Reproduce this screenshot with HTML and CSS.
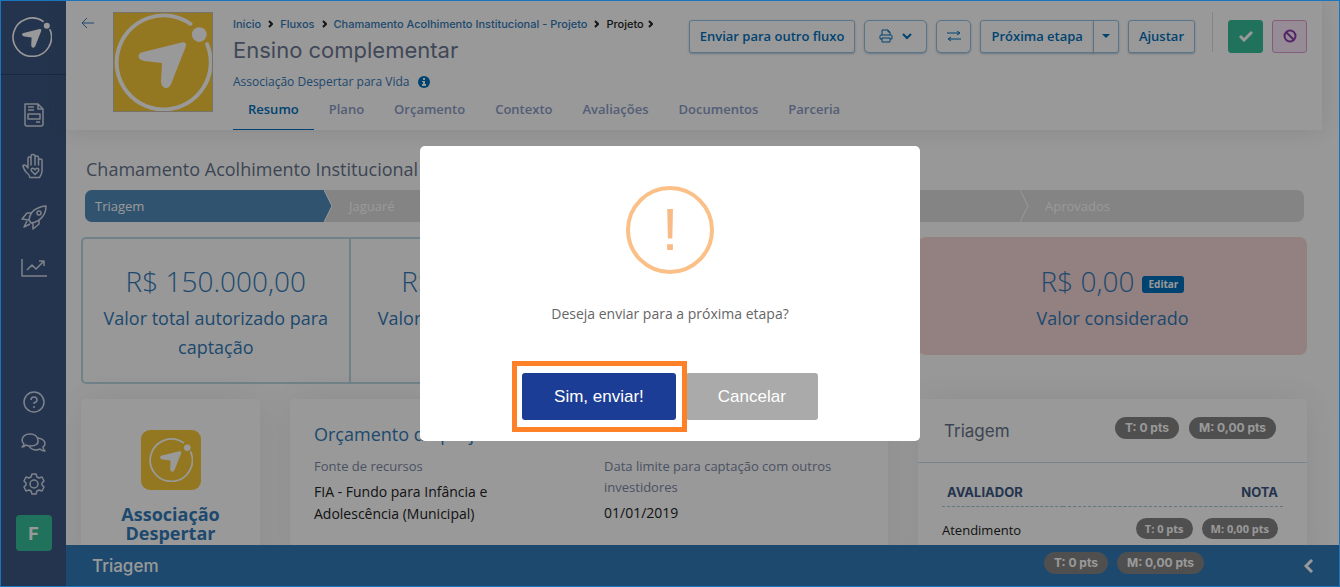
FILE: index.html
```html
<!DOCTYPE html>
<html lang="pt-br">
<head>
    <meta charset="UTF-8">
    <meta name="viewport" content="width=device-width, initial-scale=1">
    <title>Ensino complementar</title>
    <link rel="stylesheet" href="styles.css">
</head>
<body>
    <!-- Símbolos usados no menu, nos avatares e no breadcrumb -->
    <svg class="sprite" aria-hidden="true">
        <symbol id="marca" viewBox="0 0 100 100">
            <path d="M78 11A48 48 0 1 0 95 32" fill="none" stroke="currentColor" stroke-width="4" stroke-linecap="round"/>
            <circle cx="87" cy="22" r="7.500" fill="currentColor"/>
            <path d="M29 40L69 30Q75 29 73 35L58 73Q55 78 51 76Q48 74 48 70L49 51L31 49Q25 48 25 44Q25 41 29 40Z" fill="currentColor"/>
        </symbol>
        <symbol id="seta" viewBox="0 0 5 8"><path d="M1 1l3 3-3 3" fill="none" stroke="#222" stroke-width="2"/></symbol>
    </svg>

    <aside class="sidebar">
        <a class="marca" href="#" aria-label="Início"><svg><use href="#marca"/></svg></a>
        <nav class="menu">
            <a href="#" aria-label="Projetos"><svg width="24" height="26" viewBox="0 0 24 26"><path d="M3 2h13l5 5v15a2 2 0 0 1-2 2H5a2 2 0 0 1-2-2zM16 2v5h5M6 5h6M6 8h6M6 12h12v5H6zM14 20h4"/></svg></a>
            <a href="#" aria-label="Doações"><svg width="24" height="26" viewBox="0 0 24 26"><path d="M8 24.500Q7 21 4 19Q1 15 1 12.500Q3.500 11 6 15V5.500Q6 4 7.500 4T9 5.500V12V3.500Q9 1.500 11 1.500T13 3.500V12V4.500Q13 3 14.700 3T16.500 4.500V12V7.500Q16.500 6 18.300 6T20 7.500V18Q20 21 17.500 24.500Z"/><path d="M13 21.500l-3.500-3.500q-1-2.500 1.200-2.800 1.300 0 2.300 1.600 1-1.600 2.300-1.600 2.200.3 1.200 2.800z"/></svg></a>
            <a href="#" aria-label="Fluxos"><svg width="26" height="26" viewBox="0 0 26 26"><path d="M8 16q1-9 9-12 4-2 8-2 0 6-3 10-4 6-12 7zM10 9H6l-5 6 7 1M18 16v4l-6 5v-6M6 17l-3 6 6-3"/><circle cx="18" cy="9" r="2"/></svg></a>
            <a href="#" aria-label="Relatórios"><svg width="26" height="22" viewBox="0 0 26 22"><path d="M1 2v17h25M6 13l5-5 4 4 7-7M18 4h5v5"/></svg></a>
        </nav>
        <div class="menu menu-rodape">
            <a href="#" aria-label="Ajuda"><svg width="22" height="22" viewBox="0 0 22 22"><circle cx="11" cy="11" r="10"/><path d="M8 9q0-3 3-3t3 3q0 2-3 3v1M11 15v2"/></svg></a>
            <a href="#" aria-label="Mensagens"><svg width="26" height="20" viewBox="0 0 26 20"><path d="M1 14q2-2 2-3-2-2-2-4 1-6 8-6t8 6-8 6q-2 0-4-1-2 2-4 2zM8 13q2 4 8 4l3-1q2 2 5 2-2-2-2-4 2-1 2-4-1-4-7-5"/></svg></a>
            <a href="#" aria-label="Configurações"><svg width="22" height="22" viewBox="0 0 22 22"><path d="M9 1h4l1 3 2 1 3-1 2 4-2 2v2l2 2-2 4-3-1-2 1-1 3H9l-1-3-2-1-3 1-2-4 2-2v-2L1 8l2-4 3 1 2-1z"/><circle cx="11" cy="11" r="4"/></svg></a>
        </div>
        <button class="usuario" type="button">F</button>
    </aside>

    <main class="pagina">
        <header class="cabecalho">
            <a class="voltar" href="#" aria-label="Voltar"><svg width="13" height="12" viewBox="0 0 13 12"><path d="M13 6H1M6 1L1 6l5 5"/></svg></a>
            <div class="avatar"><svg><use href="#marca"/></svg></div>
            <div class="dados">
                <div class="topo">
                    <div class="titulo">
                        <nav class="breadcrumb">
                            <a href="#">Início</a><svg class="seta"><use href="#seta"/></svg>
                            <a href="#">Fluxos</a><svg class="seta"><use href="#seta"/></svg>
                            <a href="#">Chamamento Acolhimento Institucional - Projeto</a><svg class="seta"><use href="#seta"/></svg>
                            <span>Projeto</span><svg class="seta ultima"><use href="#seta"/></svg>
                        </nav>
                        <h1>Ensino complementar</h1>
                        <a class="entidade" href="#">Associação Despertar para Vida
                            <svg width="12" height="12" viewBox="0 0 12 12"><circle cx="6" cy="6" r="6" fill="#0071bc"/><path d="M5 2h2v2H5zM4 5h3v3h1v2H4V8h1V6H4z" fill="#fff"/></svg>
                        </a>
                    </div>
                    <div class="acoes">
                        <button class="btn" type="button">Enviar para outro fluxo</button>
                        <button class="btn btn-imprimir" type="button" aria-label="Imprimir">
                            <svg width="14" height="14" viewBox="0 0 14 14"><path d="M3 6V1h6l2 2v3M9 1v2h2M3 10H1V7q0-1 1-1h10q1 0 1 1v3h-2M3 9h8v4H3z"/></svg>
                            <svg class="grosso" width="10" height="7" viewBox="0 0 10 7"><path d="M1 1l4 4 4-4"/></svg>
                        </button>
                        <button class="btn btn-icone" type="button" aria-label="Trocar">
                            <svg width="14" height="10" viewBox="0 0 14 10"><path d="M0 2h12M10 0l3 2-3 2M14 8H2M4 6L1 8l3 2"/></svg>
                        </button>
                        <div class="grupo">
                            <button class="btn" type="button">Próxima etapa</button>
                            <button class="btn btn-caret" type="button" aria-label="Mais etapas"><span class="caret"></span></button>
                        </div>
                        <button class="btn" type="button">Ajustar</button>
                        <span class="divisor"></span>
                        <button class="btn btn-icone btn-aprovar" type="button" aria-label="Aprovar">
                            <svg width="14" height="11" viewBox="0 0 14 11"><path d="M1 5l4 4 8-8"/></svg>
                        </button>
                        <button class="btn btn-icone btn-recusar" type="button" aria-label="Recusar">
                            <svg width="14" height="14" viewBox="0 0 14 14"><circle cx="7" cy="7" r="5.500"/><path d="M3 3l8 8"/></svg>
                        </button>
                    </div>
                </div>
                <nav class="abas">
                    <a class="ativa" href="#">Resumo</a>
                    <a href="#">Plano</a>
                    <a href="#">Orçamento</a>
                    <a href="#">Contexto</a>
                    <a href="#">Avaliações</a>
                    <a href="#">Documentos</a>
                    <a href="#">Parceria</a>
                </nav>
            </div>
        </header>

        <section class="conteudo">
            <h2 class="fluxo">Chamamento Acolhimento Institucional</h2>
            <ol class="etapas">
                <li class="atual">Triagem<svg viewBox="0 0 9 32"><path d="M0 0l8 16-8 16z"/><path class="linha" d="M0 0l8 16-8 16"/></svg></li>
                <li>Jaguaré<svg viewBox="0 0 9 32"><path class="linha" d="M0 0l8 16-8 16"/></svg></li>
                <li><svg viewBox="0 0 9 32"><path class="linha" d="M0 0l8 16-8 16"/></svg></li>
                <li><svg viewBox="0 0 9 32"><path class="linha" d="M0 0l8 16-8 16"/></svg></li>
                <li>Aprovados</li>
            </ol>

            <div class="valores">
                <div class="caixas">
                    <div class="valor"><strong>R$ 150.000,00</strong><span>Valor total autorizado para captação</span></div>
                    <div class="valor"><strong>R$ 15.000,00</strong><span>Valor máximo autorizado</span></div>
                    <div class="valor"></div>
                </div>
                <div class="valor considerado">
                    <strong>R$ 0,00 <button class="editar" type="button">Editar</button></strong>
                    <span>Valor considerado</span>
                </div>
            </div>

            <div class="cards">
                <article class="card card-entidade">
                    <div class="logo"><svg><use href="#marca"/></svg></div>
                    <h3>Associação Despertar</h3>
                </article>
                <article class="card card-orcamento">
                    <h3>Orçamento do projeto</h3>
                    <dl>
                        <div>
                            <dt>Fonte de recursos</dt>
                            <dd>FIA - Fundo para Infância e Adolescência (Municipal)</dd>
                        </div>
                        <div>
                            <dt>Data limite para captação com outros investidores</dt>
                            <dd>01/01/2019</dd>
                        </div>
                    </dl>
                </article>
                <article class="card card-triagem">
                    <header>
                        <h3>Triagem</h3>
                        <span class="badge">T: 0 pts</span>
                        <span class="badge">M: 0,00 pts</span>
                    </header>
                    <table>
                        <thead>
                            <tr><th>AVALIADOR</th><th>NOTA</th></tr>
                        </thead>
                        <tbody>
                            <tr>
                                <td>Atendimento</td>
                                <td><span class="badge menor">T: 0 pts</span><span class="badge menor">M: 0,00 pts</span></td>
                            </tr>
                        </tbody>
                    </table>
                </article>
            </div>
        </section>

        <footer class="barra">
            <h4>Triagem</h4>
            <span class="badge">T: 0 pts</span>
            <span class="badge">M: 0,00 pts</span>
            <button type="button" aria-label="Expandir"><svg width="10" height="14" viewBox="0 0 10 14"><path d="M8 1L2 7l6 6"/></svg></button>
        </footer>
    </main>

    <!-- Confirmação -->
    <div class="overlay">
        <div class="modal" role="dialog" aria-modal="true" aria-labelledby="pergunta">
            <div class="alerta">!</div>
            <p id="pergunta">Deseja enviar para a próxima etapa?</p>
            <div class="modal-botoes">
                <button class="confirmar" type="button">Sim, enviar!</button>
                <button class="cancelar" type="button">Cancelar</button>
            </div>
        </div>
    </div>
</body>
</html>
```

FILE: styles.css
```css
* {
    box-sizing: border-box;
}
body {
    margin: 0;
    height: 100vh;
    display: flex;
    overflow: hidden;
    background-color: #fefefe;
    font-family: "Open Sans", "Noto Sans", sans-serif;
    font-size: 13px;
    color: #222;
}
h1, h2, h3, h4, p, ol, dl, dd {
    margin: 0;
    padding: 0;
    font-weight: 400;
}
a {
    color: #337ab7;
    text-decoration: none;
}
button {
    font-family: inherit;
    cursor: pointer;
}
svg {
    fill: none;
    stroke: currentColor;
}
symbol {
    stroke: none;
}
.sprite {
    position: absolute;
    width: 0;
    height: 0;
}

/* Menu lateral */
.sidebar {
    flex: none;
    width: 66px;
    display: flex;
    flex-direction: column;
    align-items: center;
    padding: 0 0 36px 1px;
    background-color: #3c5882;
}
.marca {
    width: 100%;
    height: 75px;
    padding: 17px 11px;
    border-bottom: 1px solid #2c426a;
    color: #fff;
}
.marca svg {
    display: block;
    width: 40px;
    height: 40px;
    stroke: none;
}
.menu {
    display: flex;
    flex-direction: column;
    padding-top: 14px;
}
.menu a {
    height: 51px;
    display: flex;
    align-items: center;
    justify-content: center;
    color: #d2d9e8;
}
.menu svg {
    stroke-width: 1.5;
    stroke-linejoin: round;
}
.menu-rodape {
    margin-top: auto;
    padding: 0 0 11px;
}
.menu-rodape a {
    height: 41px;
}
.usuario {
    width: 36px;
    height: 36px;
    padding: 0;
    border: 0;
    border-radius: 4px;
    background-color: #36bf99;
    color: #fff;
    font-family: Inter, sans-serif;
    font-size: 18px;
    font-weight: 700;
}

/* Cabeçalho */
.pagina {
    flex: 1;
    min-width: 0;
    display: flex;
    flex-direction: column;
}
.cabecalho {
    position: relative;
    flex: none;
    display: flex;
    align-items: flex-start;
    margin-right: 18px;
    padding-right: 15px;
    background-color: #fff;
    box-shadow: 0 0 24px rgba(60, 60, 80, 0.14);
}
.voltar {
    flex: none;
    width: 47px;
    padding: 17px 0 0 15px;
}
.voltar svg {
    display: block;
}
.avatar {
    flex: none;
    width: 100px;
    height: 100px;
    margin: 12px 20px 0 0;
    border: 1px solid #c8c0b0;
    background-color: #f7c837;
    color: #fff;
}
.avatar svg, .logo svg {
    display: block;
    width: 100%;
    height: 100%;
    stroke: none;
}
.dados {
    flex: 1;
    min-width: 0;
}
.topo {
    display: flex;
    align-items: flex-start;
    justify-content: space-between;
}
.titulo {
    padding-top: 16px;
}
.breadcrumb {
    display: flex;
    align-items: center;
    font-family: Inter, sans-serif;
    font-size: 11px;
    font-weight: 500;
    line-height: 16px;
    white-space: nowrap;
}
.seta {
    width: 5px;
    height: 8px;
    margin: 0 7px;
    stroke: none;
}
.seta.ultima {
    margin: 0 4px;
}
.titulo h1 {
    margin-top: 4px;
    font-family: Inter, sans-serif;
    font-size: 22px;
    line-height: 28px;
    color: #6c7893;
}
.entidade {
    display: flex;
    align-items: center;
    gap: 9px;
    margin-top: 8px;
    font-size: 12px;
    line-height: 20px;
}
.entidade svg {
    stroke: none;
}
.abas {
    display: flex;
    margin-top: 7px;
}
.abas a {
    padding: 0 15px 10px;
    border-bottom: 1px solid transparent;
    line-height: 20px;
    font-weight: 600;
    color: #8c9cc6;
}
.abas .ativa {
    border-color: #0071bc;
    color: #0071bc;
}
.acoes {
    display: flex;
    align-items: center;
    gap: 9px;
    height: 48px;
    margin-top: 12px;
}
.btn {
    display: flex;
    align-items: center;
    justify-content: center;
    height: 33px;
    padding: 0 10px;
    border: 1px solid #96c4e4;
    border-radius: 3px;
    background-color: #fff;
    box-shadow: 0 1px 2px rgba(0, 60, 110, 0.3);
    color: #0071bc;
    font-size: 13px;
    font-weight: 600;
    white-space: nowrap;
}
.btn-imprimir {
    width: 63px;
    gap: 9px;
    border-radius: 5px;
}
.btn .grosso {
    stroke-width: 2;
}
.btn-icone {
    width: 35px;
    padding: 0;
    border-radius: 5px;
}
.grupo {
    display: flex;
}
.grupo .btn:first-child {
    border-radius: 3px 0 0 3px;
}
.grupo .btn-caret {
    width: 26px;
    margin-left: -1px;
    padding: 0;
    border-radius: 0 3px 3px 0;
}
.caret {
    border: 4px solid transparent;
    border-top-color: #0071bc;
    border-bottom: 0;
}
.divisor {
    align-self: flex-start;
    width: 1px;
    height: 40px;
    margin: 0 6px 0 8px;
    background-color: #dcdceb;
}
.btn-aprovar {
    border-color: #36bf99;
    border-radius: 3px;
    background-color: #36bf99;
    box-shadow: none;
    color: #fff;
}
.btn-aprovar svg {
    stroke-width: 3;
}
.btn-recusar {
    border-color: #dc9cd0;
    border-radius: 3px;
    background-color: #fbeafb;
    box-shadow: none;
    color: #8a3cab;
}
.btn-recusar svg {
    stroke-width: 2;
}

/* Etapas */
.conteudo {
    flex: 1;
    min-height: 0;
    padding: 27px 33px 0 15px;
    overflow: hidden;
}
.fluxo {
    padding-left: 5px;
    font-size: 18px;
    line-height: 24px;
    color: #66748c;
}
.etapas {
    display: grid;
    grid-template-columns: 247fr 232fr 232fr 232fr 276fr;
    margin: 9px 3px 15px 4px;
    border-radius: 7px;
    background-color: #dcdcdc;
    list-style: none;
    overflow: hidden;
}
.etapas li {
    position: relative;
    height: 32px;
    padding-left: 17px;
    line-height: 32px;
    color: #fff;
}
.etapas .atual {
    padding-left: 10px;
    background: linear-gradient(to left, #dcdcdc 8px, #508abb 8px);
}
.etapas svg {
    position: absolute;
    top: 0;
    right: -1px;
    width: 9px;
    height: 32px;
    fill: #508abb;
    stroke: none;
}
.etapas .linha {
    fill: none;
    stroke: #fff;
}

/* Valores */
.valores {
    display: grid;
    grid-template-columns: 807fr 389fr;
    column-gap: 30px;
    align-items: start;
}
.caixas {
    display: grid;
    grid-template-columns: repeat(3, minmax(0, 1fr));
    border: 2px solid #bcd8e4;
    border-radius: 5px;
}
.valor {
    padding: 22px 15px 20px;
    border-right: 2px solid #bcd8e4;
    text-align: center;
    color: #337ab7;
}
.valor:last-child {
    border-right: 0;
}
.valor strong {
    display: flex;
    align-items: center;
    justify-content: center;
    gap: 8px;
    margin-bottom: 2px;
    font-size: 28px;
    line-height: 41px;
    font-weight: 300;
}
.valor span {
    display: block;
    font-size: 18px;
    line-height: 29px;
}
.considerado {
    padding: 24px 15px 22px;
    border-radius: 8px;
    background-color: #f5d6d6;
}
.editar {
    height: 17px;
    margin-top: 5px;
    padding: 0 6px;
    border: 0;
    border-radius: 3px;
    background-color: #0071bc;
    color: #fff;
    font-size: 10px;
    font-weight: 700;
    line-height: 17px;
}

/* Cards */
.cards {
    display: grid;
    grid-template-columns: 179fr 598fr 389fr;
    column-gap: 30px;
    margin-top: 15px;
}
.card {
    min-height: 160px;
    border-radius: 4px;
    background-color: #fff;
    box-shadow: 0 0 35px rgba(60, 60, 80, 0.1);
}
.card-entidade {
    padding: 31px 35px;
    text-align: center;
}
.logo {
    width: 60px;
    height: 60px;
    margin: 0 auto 15px;
    padding: 8px;
    border-radius: 9px;
    background-color: #f7c837;
    color: #fff;
}
.card-entidade h3 {
    font-size: 18px;
    line-height: 19px;
    font-weight: 700;
    color: #337ab7;
}
.card-orcamento {
    padding: 23px 24px;
}
.card-orcamento h3 {
    margin-bottom: 10px;
    font-size: 18px;
    line-height: 24px;
    color: #337ab7;
}
.card-orcamento dl {
    display: grid;
    grid-template-columns: 1fr 1fr;
    gap: 30px;
}
.card-orcamento dt {
    line-height: 21px;
    color: #7d88a4;
}
.card-orcamento dd {
    margin-top: 4px;
    font-size: 14px;
    line-height: 22px;
}
.card-orcamento dl > div {
    padding-right: 20px;
}
.card-triagem header {
    display: flex;
    align-items: center;
    gap: 10px;
    height: 64px;
    padding: 0 31px 6px 26px;
    border-bottom: 1px solid #c4dcee;
}
.card-triagem h3 {
    margin: 6px auto 0 0;
    font-family: Inter, sans-serif;
    font-size: 17px;
    line-height: 22px;
    color: #66748c;
}
.badge {
    display: inline-block;
    padding: 0 10px;
    border-radius: 11px;
    background-color: #848484;
    color: #fff;
    font-family: Inter, sans-serif;
    font-size: 12px;
    font-weight: 700;
    line-height: 22px;
    white-space: nowrap;
}
.badge.menor {
    margin-left: 9px;
    padding: 0 9px;
    font-family: inherit;
    font-size: 11px;
    line-height: 21px;
}
table {
    width: calc(100% - 48px);
    margin: 16px 24px 0;
    border-collapse: collapse;
}
th {
    padding: 4px 5px;
    border-bottom: 1px dashed #a8c8d8;
    font-family: Inter, sans-serif;
    font-size: 13px;
    font-weight: 700;
    line-height: 19px;
    text-align: left;
    color: #3c5882;
}
td {
    padding: 10px 5px 0 0;
}
td:first-child {
    padding-top: 14px;
}
th:last-child, td:last-child {
    text-align: right;
}

/* Barra inferior */
.barra {
    position: relative;
    flex: none;
    height: 42px;
    display: flex;
    align-items: center;
    gap: 9px;
    padding: 0 26px;
    background-color: #337bb7;
    color: #fff;
}
.barra h4 {
    margin-right: auto;
    font-family: Inter, sans-serif;
    font-size: 17px;
    font-weight: 500;
}
.barra .badge {
    margin-bottom: 6px;
}
.barra button {
    display: flex;
    margin-left: 91px;
    padding: 0;
    border: 0;
    background: none;
    color: #fff;
}
.barra svg {
    stroke-width: 3;
}

/* Modal */
.overlay {
    position: fixed;
    inset: 0;
    display: flex;
    align-items: center;
    justify-content: center;
    border: 1px solid #1a75bf;
    background-color: rgba(0, 0, 0, 0.4);
}
.modal {
    width: 500px;
    max-width: 90%;
    padding: 40px 20px 21px;
    border-radius: 5px;
    background-color: #fff;
    text-align: center;
}
.alerta {
    width: 88px;
    height: 88px;
    margin: 0 auto 29px;
    border: 4px solid #fac088;
    border-radius: 50%;
    color: #f8bb86;
    font-family: "Liberation Sans", Arial, sans-serif;
    font-size: 60px;
    line-height: 80px;
}
.modal p {
    font-size: 14px;
    line-height: 22px;
    color: #666;
}
.modal-botoes {
    display: flex;
    justify-content: center;
    gap: 10px;
    margin-top: 48px;
}
.modal-botoes button {
    position: relative;
    height: 47px;
    padding: 0 32px;
    border: 0;
    border-radius: 3px;
    background-color: #aaa;
    color: #fff;
    font-family: "Liberation Sans", Arial, sans-serif;
    font-size: 17px;
}
.modal-botoes .confirmar {
    z-index: 1;
    background-color: #1c3d95;
}
/* Destaque em volta do botão principal */
.confirmar::after {
    content: "";
    position: absolute;
    inset: -12px -11px -12px -10px;
    border: 5px solid #ff8127;
}
```
